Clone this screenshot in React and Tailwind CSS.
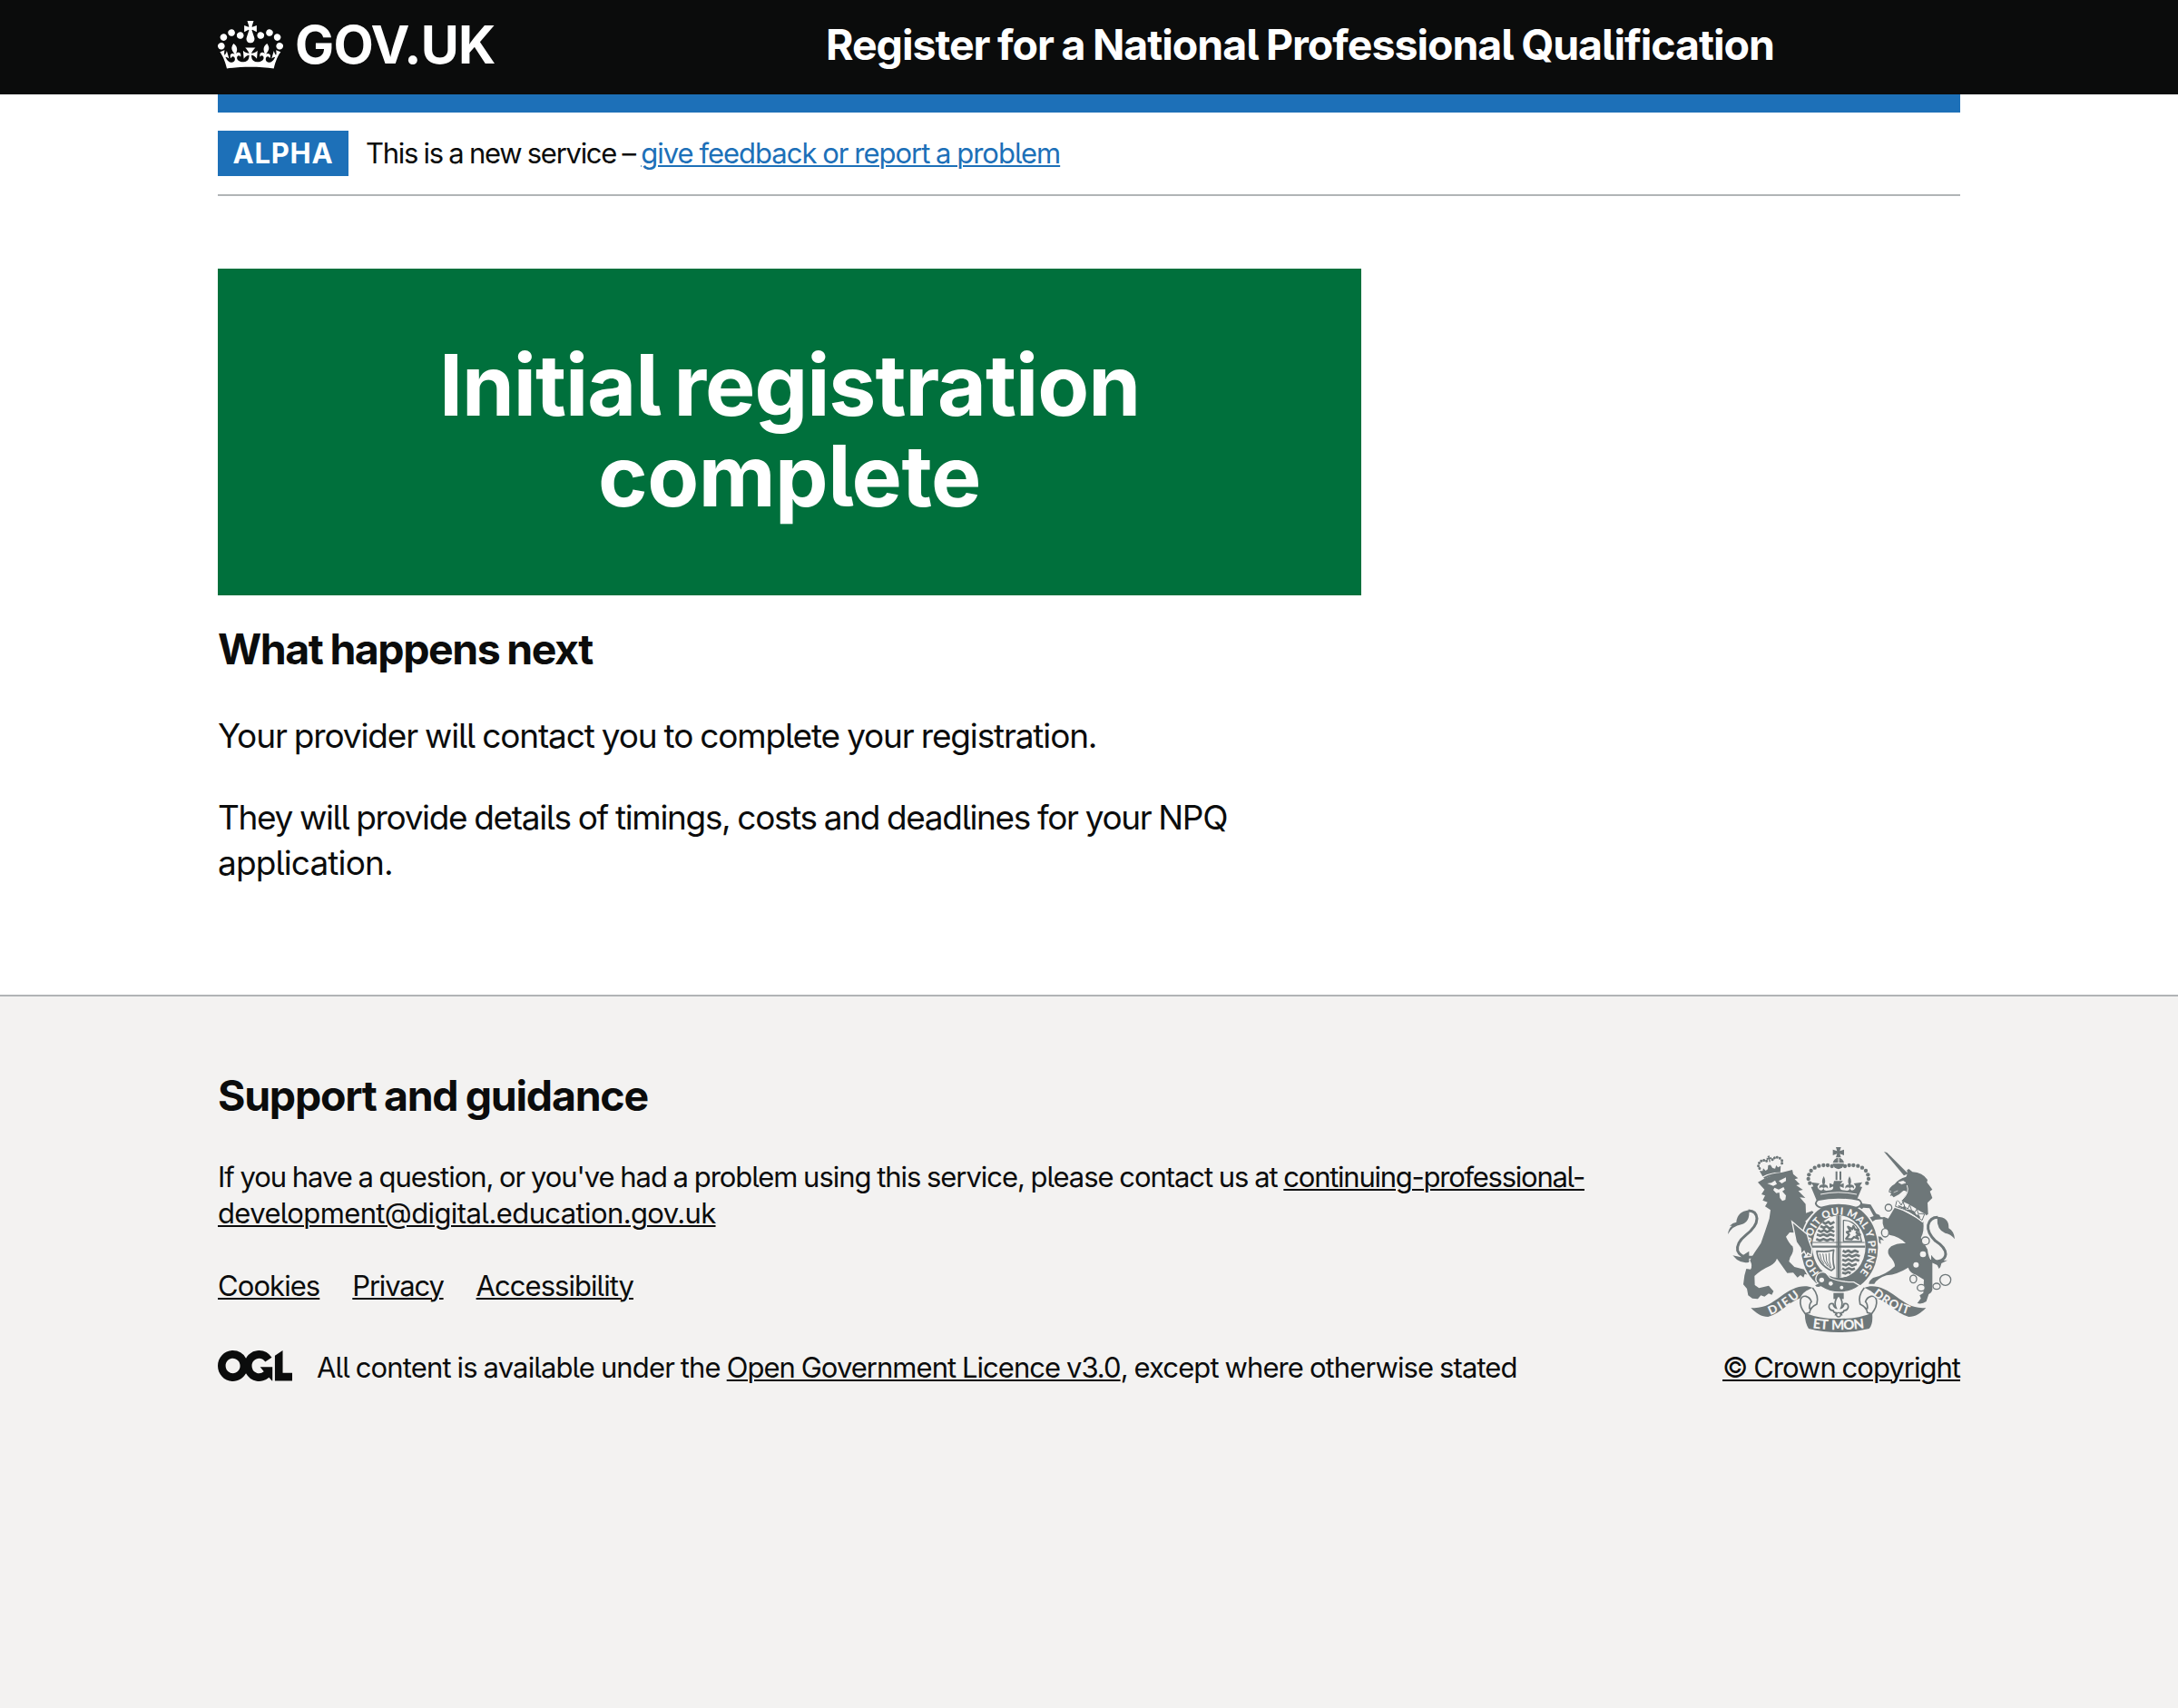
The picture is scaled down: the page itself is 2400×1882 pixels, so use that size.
import React from "react";

const CROWN =
  "M25 30.2c3.5 1.5 7.7-.2 9.1-3.7 1.5-3.6-.2-7.8-3.9-9.2-3.6-1.4-7.6.3-9.1 3.9-1.4 3.5.3 7.5 3.9 9zM9 39.5c3.6 1.5 7.8-.2 9.2-3.7 1.5-3.6-.2-7.8-3.9-9.1-3.6-1.5-7.6.2-9.1 3.8-1.4 3.5.3 7.5 3.8 9zM4.4 57.2c3.5 1.5 7.7-.2 9.1-3.8 1.5-3.6-.2-7.7-3.9-9.1-3.5-1.5-7.6.3-9.1 3.8-1.4 3.5.3 7.6 3.9 9.1zm38.3-21.4c3.5 1.5 7.7-.2 9.1-3.8 1.5-3.6-.2-7.7-3.9-9.1-3.6-1.5-7.6.3-9.1 3.8-1.3 3.6.4 7.7 3.9 9.1zm64.4-5.6c-3.6 1.5-7.8-.2-9.1-3.7-1.5-3.6.2-7.8 3.8-9.2 3.6-1.4 7.7.3 9.2 3.9 1.3 3.5-.4 7.5-3.9 9zm15.9 9.3c-3.6 1.5-7.7-.2-9.1-3.7-1.5-3.6.2-7.8 3.7-9.1 3.6-1.5 7.7.2 9.2 3.8 1.5 3.5-.3 7.5-3.8 9zm4.7 17.7c-3.6 1.5-7.8-.2-9.2-3.8-1.5-3.6.2-7.7 3.9-9.1 3.6-1.5 7.7.3 9.2 3.8 1.3 3.5-.4 7.6-3.9 9.1zM89.3 35.8c-3.6 1.5-7.8-.2-9.2-3.8-1.4-3.6.2-7.7 3.9-9.1 3.6-1.5 7.7.3 9.2 3.8 1.4 3.6-.3 7.7-3.9 9.1zM69.7 17.7l8.9 4.7V9.3l-8.9 2.8c-.2-.3-.5-.6-.9-.9L72.4 0H59.6l3.5 11.2c-.3.3-.6.5-.9.9l-8.8-2.8v13.1l8.8-4.7c.3.3.6.7.9.9l-5 15.4v.1c-.2.8-.4 1.6-.4 2.4 0 4.1 3.1 7.5 7 8.1h.2c.3 0 .7.1 1 .1.4 0 .7 0 1-.1h.2c4-.6 7.1-4.1 7.1-8.1 0-.8-.1-1.7-.4-2.4V34l-5.1-15.4c.4-.2.7-.6 1-.9zM66 92.8c16.9 0 32.8 1.1 47.1 3.2 4-16.9 8.9-26.7 14-33.5l-9.6-3.4c1 4.9 1.1 7.2 0 10.2-1.5-1.4-3-4.3-4.2-8.7L108.6 76c2.8-2 5-3.2 7.5-3.3-4.4 9.4-10 11.9-13.6 11.2-4.3-.8-6.3-4.6-5.6-7.9 1-4.7 5.7-5.9 8-.5 4.3-8.7-3-11.4-7.6-8.8 7.1-7.2 7.9-13.5 2.1-21.1-8 6.1-8.1 12.3-4.5 20.8-4.7-5.4-12.1-2.5-9.5 6.2 3.4-5.2 7.9-2 7.2 3.1-.6 4.3-6.4 7.8-13.5 7.2-10.3-.9-10.9-8-11.2-13.8 2.5-.5 7.1 1.8 11 7.3L80.2 60c-4.1 4.4-8 5.3-12.3 5.4 1.4-4.4 8-11.6 8-11.6H55.5s6.4 7.2 7.9 11.6c-4.2-.1-8-1-12.3-5.4l1.4 16.4c3.9-5.5 8.5-7.7 10.9-7.3-.3 5.8-.9 12.8-11.1 13.8-7.2.6-12.9-2.9-13.5-7.2-.7-5 3.8-8.3 7.1-3.1 2.7-8.7-4.6-11.6-9.4-6.2 3.7-8.5 3.6-14.7-4.6-20.8-5.8 7.6-5 13.9 2.2 21.1-4.7-2.6-11.9.1-7.7 8.8 2.3-5.5 7.1-4.2 8.1.5.7 3.3-1.3 7.1-5.7 7.9-3.5.7-9-1.8-13.5-11.2 2.5.1 4.7 1.3 7.5 3.3l-4.7-15.4c-1.2 4.4-2.7 7.2-4.3 8.7-1.1-3-.9-5.3 0-10.2l-9.5 3.4c5 6.9 9.9 16.7 14 33.5 14.8-2.1 30.8-3.2 47.7-3.2z";

const OGL =
  "M421.5 142.8V.1l-50.7 32.3v161.1h112.4v-50.7zm-122.3-9.6A47.12 47.12 0 0 1 221 97.8c0-26 21.1-47.1 47.1-47.1 16.7 0 31.4 8.7 39.7 21.8l42.7-27.2A97.63 97.63 0 0 0 268.1 0c-36.5 0-68.3 20.1-85.1 49.7A98 98 0 0 0 97.8 0C43.9 0 0 43.9 0 97.8s43.9 97.8 97.8 97.8c36.5 0 68.3-20.1 85.1-49.7a97.76 97.76 0 0 0 149.6 25.4l19.4 22.2h3v-87.8h-80l24.3 27.5zM97.8 145c-26 0-47.1-21.1-47.1-47.1s21.1-47.1 47.1-47.1 47.1 21.1 47.1 47.1S123.8 145 97.8 145";

const BEADS = [
  [386, 105], [372, 102], [358, 102], [343, 104], [329, 110], [317, 120], [310, 133], [308, 147], [313, 161],
];

const LION_BEADS = [
  [146, 104], [144, 95], [149, 86], [157, 81], [166, 81], [174, 85],
  [222, 104], [224, 95], [219, 86], [211, 81], [202, 81], [194, 85],
];

const INK = "#6e7779";
const PAPER = "#f3f2f1";

function CrestCrown() {
  return (
    <g fill={INK}>
      <path d="M399 42h17l-4 13 14-5v19l-14-5 4 12h-17l4-12-14 5v-19l14 5z" />
      <circle cx="407.500" cy="96" r="18.500" />
      <path d="M389 95h37M408 77v17" stroke={PAPER} strokeWidth="3" fill="none" />
      {BEADS.map(([x, y]) => (
        <g key={x}>
          <circle cx={x} cy={y} r="6.500" />
          <circle cx={815 - x} cy={y} r="6.500" />
        </g>
      ))}
      <path d="M401 122v29M414 122v29" stroke={INK} strokeWidth="6" />
      <path d="M393 154h29l-9 12 12-5v16l-12-5q-2 10 6 12l17 2q11-2 8-10-8-4-14 3-1-13 12-13-6-13 2-28 9 15 3 28 14 0 12 13-6-7-13-3-2 7 6 9 11-1 13-13l-7-10 28-4-8 14 8 2-20 48q-66-14-129 0l-20-48 8-2-8-14 28 4-7 10q2 12 13 13 8-2 6-9-7-4-13 3-2-13 12-13-6-13 3-28 8 15 2 28 13 0 12 13-6-7-14-3-3 8 8 10l17-2q8-2 6-12l-12 5v-16l12 5z" />
      <path d="M348 198q59-13 120 0" stroke={PAPER} strokeWidth="3" fill="none" />
      <path d="M341 216q66-14 134 0 10 6 8 14-4 10-18 12-58-18-114 0-14-2-18-12-2-8 8-14z" fill={PAPER} stroke={INK} strokeWidth="6" />
    </g>
  );
}

function Garter() {
  return (
    <g>
      <ellipse cx="411" cy="374" rx="127" ry="148" fill={INK} />
      <ellipse cx="409" cy="371" rx="88" ry="103" fill={PAPER} />
      <path id="motto" d="M345 457A96 111 0 1 1 474 460" fill="none" />
      <text fill={PAPER} fontFamily="Lato" fontWeight="900" fontSize="34">
        <textPath href="#motto" textLength="500">HONI SOIT QUI MAL Y PENSE</textPath>
      </text>
      <path d="M322 357h172M402 270v203M414 270v203" stroke={INK} strokeWidth="3" />
      <path d="M408 268v206M321 371h175" stroke={INK} strokeWidth="7" />
      <g fill="none" stroke={INK} strokeWidth="8" strokeLinejoin="round">
        <path d="M356 290l8 5 10-6 8 7 12-7M348 303l12 6 8-6 10 8 14-6M340 317l10 5 10-6 10 7 12-7 12 6M336 331l12 4 10-5 12 6 10-6 14 5M334 346l12 5 12-5 12 5 10-5 14 4" />
        <path d="M422 384l8 5 10-5 10 6 12-6 12 5M420 399l12 4 10-5 10 6 14-6 12 5M420 414l10 4 10-5 12 6 12-6 12 5M420 429l12 4 10-6 10 7 16-6M420 443l10 5 12-6 10 5 10-4M420 457l10 3 10-5 8 3" />
        <path d="M424 284q30-2 50 30l10 40h-60z" strokeWidth="4" />
        <path d="M433 345l10-14-8-8 12-4-8-14 14 8 4-10 6 12 10 0-6 10 12 6-12 4 6 10-14-6-8 8z" strokeWidth="7" />
        <path d="M336 386q4 44 48 64l10-8q-8-30-2-60-20 8-56 4z" strokeWidth="5" />
        <path d="M346 394q2 22 14 34M356 394q0 24 16 42M366 394q-2 26 14 48M377 392q-2 26 6 50" strokeWidth="3" />
      </g>
      <g fill={INK} stroke={PAPER} strokeWidth="4">
        <path d="M338 462q14-12 28-4l14 16q30 14 78 14l20 12q-30 22-66 22-34 0-62-18-18 6-22-6l12-6q-14-10-2-30z" />
        <path d="M254 288l24 20 26 22 6 22 10 26-2 22-12-8-4 10-8-16-10 10-2-20-14-20z" />
      </g>
      <g fill={PAPER}>
        <circle cx="382" cy="493" r="7" />
        <circle cx="418" cy="506" r="6" />
        <circle cx="352" cy="481" r="8" />
      </g>
    </g>
  );
}

function Lion() {
  return (
    <g fill={INK}>
      <path d="M141 158l20-11 38-16 56-14 3 14 16 14-11 3 17 17-12 3 22 15-15 4 23 23-18-2 19 22 1 30 20-7q8 4 4 8l-26 26 18 28 12 36q2 22-12 26l-6-8-4 8-8-14-6 6-2-20-10 2 2-16-12 4-2-14-22-1-12 14q10 22 22 32 6 16-8 36l-4 14 18 18 32 8 12 18-10-3-4 12-10-8-10 8-14-16-20 1-16-22-18-26q-4 14-22 24-32 14-52 34l1 30 14 10 32-8 16 18-6 12-10-4-14 10-12-4-10 12-18-2-14-10-4-22-12-14 4-30 6-22 14 2q8-12-2-30l14-24 22-32 14-40 14-42 4-28-18-12 8-14-16-6 8-16-12-4 10-16z" />
      <path d="M172 162l14-2 12-8 6 12-12 6zM210 154l24-12 0 12-14 8z" fill={PAPER} />
      <path d="M196 176l14 6 16-8 4 8-8 6 12 14-2 14-10 4-8-10-2-18-10 2-10-10z" fill={PAPER} />
      <g transform="rotate(-13 184 105)">
        <path d="M150 132l-6-20 10 2 4-8 6 10 8-4 4-12 8 0 4 12 8 4 6-10 4 8 10-2-6 20q-30-8-60 0z" />
        {LION_BEADS.map(([x, y]) => (
          <circle key={`${x}-${y}`} cx={x} cy={y} r="4.500" />
        ))}
        <path d="M180 70h8l-2 7 6-2v8l-6-2v10h-4V81l-6 2v-8l6 2zM152 135q32-8 64 0l-2 6q-30-8-60 0z" />
      </g>
      <path d="M132 404Q84 412 74 384q-4-26 26-50 38-30 38-56-2-26-28-26" fill="none" stroke={INK} strokeWidth="9" />
      <path d="M112 250q4 40-26 48-28 4-44 32 2-20 14-28l-8 0q10-10 22-12 2-34 42-40zM112 386q-18 10-26 20l-28-6 14 14q20 14 40 8z" />
    </g>
  );
}

function Unicorn() {
  return (
    <g fill={INK}>
      <path d="M558 57l10 3 70 70-14 6z" />
      <path d="M640 114l12 10q34 2 50 26l-2 8 18 24-8 6 8 22-16 16 2 38-8 4q-38-30-80-48l16-22q4-14-10-12l-14 12-18 10-6-6-6 2 4-10-9-4q2-16 20-26 14-18 38-24 6-8 3-22z" />
      <path d="M606 158l16-4 8 6-14 4zM590 192l14-6M574 186l8 2" fill={PAPER} stroke={PAPER} strokeWidth="2" />
      <path d="M634 168q10 24-16 48" fill="none" stroke={PAPER} strokeWidth="3" />
      <path d="M596 238l92 50q4 34-8 54l22 38q2 26 16 44v82q2 14-12 22l-8 24q-14 10-30 6l12-16-4-10 12-8 2-44-26-16q-20-6-26-24-34 22-72 26-30 10-40 28l-18 0q0-10 14-20 40-8 72-38 0-16-18-34-12-18 6-32 20-12 48-10-20-22-54-28-26-24-22-52l-24 2-16 10-8 12 12 14 10 18 20 2 10 12-12-2 2 14-14-10-14-6-14-32-10-28 4-8 24-8-14-26-20-2-16 14-4-16 14-12 30 4 18 30 40 16z" />
      <path d="M597 212l99 52-10 28q-44-36-94-50z" fill={PAPER} />
      <path d="M603 218l6 6 6 10 6-12 6 18 10 6 6-14 6 18 10 8 8-12 4 16 10 0 12 2" fill="none" stroke={INK} strokeWidth="3" strokeLinejoin="round" />
      <path d="M600 220l-4 18q48 12 88 46l8-20" fill="none" stroke={INK} strokeWidth="3" />
      <path d="M606 234l6 2 8 4 6-4 6 12 12 0 8 4 6 2 8 12 6-2 6 10-4 4q-34-26-70-40z" />
      <path d="M708 418q50 8 54-22 0-22-34-44-28-28-24-52 6-26 32-26" fill="none" stroke={INK} strokeWidth="9" />
      <path d="M728 272q46-2 44 38 18 10 20 36-14-18-32-20-28-10-26-52zM714 398q12 16 22 20l32-2-20 10q-2 12-8 18l-6-12-20-10z" />
      <g fill={PAPER}>
        <circle cx="687" cy="396" r="10" />
        <circle cx="664" cy="431" r="9" />
        <circle cx="552" cy="266" r="8" />
      </g>
      <g fill={PAPER} stroke={INK} strokeWidth="4">
        <circle cx="573" cy="242" r="11" />
        <ellipse cx="562" cy="325" rx="12" ry="14" />
        <circle cx="695" cy="352" r="13" />
        <ellipse cx="655" cy="478" rx="11" ry="13" />
        <ellipse cx="681" cy="507" rx="13" ry="11" />
        <ellipse cx="732" cy="502" rx="12" ry="10" />
        <circle cx="761" cy="481" r="18" />
      </g>
    </g>
  );
}

function Scroll() {
  return (
    <g fill={INK}>
      <path d="M118 573c44 4 66-14 100-38 32-24 70-42 104-28-20 8-36 18-40 34-40 14-62 48-107 62-22 0-40-12-57-30z" />
      <path d="M697 573c-44 4-66-14-100-38-32-24-70-42-104-28 20 8 36 18 40 34 40 14 62 48 107 62 22 0 40-12 57-30z" />
      <path d="M322 507q22 26 14 54-22 10-24 28l-14 4q-20-24-16-46 4-14 18-12 14 4 18 18-8 8-6 24" fill={PAPER} stroke={INK} strokeWidth="5" />
      <path d="M493 507q-22 26-14 54 22 10 24 28l14 4q20-24 16-46-4-14-18-12-14 4-18 18 8 8 6 24" fill={PAPER} stroke={INK} strokeWidth="5" />
      <path d="M297 590q50 20 111 19 62 1 111-19 4 36-10 52-48 12-101 12t-99-12q-14-22-12-52z" />
      <path id="dieu" d="M182 597Q226 581 286 531" fill="none" />
      <path id="droit" d="M520 530Q578 580 644 596" fill="none" />
      <path id="etmon" d="M322 640Q408 652 494 640" fill="none" />
      <g fill={PAPER} fontFamily="Lato" fontWeight="900" fontSize="40" wordSpacing="6">
        <text><textPath href="#dieu" textLength="116">DIEU</textPath></text>
        <text><textPath href="#droit" textLength="136">DROIT</textPath></text>
        <text fontSize="45"><textPath href="#etmon" textLength="172">ET MON</textPath></text>
      </g>
      <path d="M391 524h34v20h-34z" />
      <path d="M408 532q-18 20-8 42-8-2-10-14-14-4-14 10 2 12 14 12 2 8 10 8l-2 6h20l-2-6q8 0 10-8 12 0 14-12 0-14-14-10-2 12-10 14 10-22-8-42z" fill={PAPER} stroke={INK} strokeWidth="5" />
      <circle cx="408" cy="596" r="7" fill={PAPER} stroke={INK} strokeWidth="4" />
    </g>
  );
}

function Crest({ className }) {
  return (
    <svg viewBox="42 42 750 612" className={className} aria-hidden="true">
      <Lion />
      <Unicorn />
      <ellipse cx="411" cy="374" rx="132" ry="153" fill={PAPER} />
      <Garter />
      <CrestCrown />
      <Scroll />
    </svg>
  );
}

const link = "underline decoration-2 underline-offset-[2px]";

export default function App() {
  return (
    <div className="flex h-[1882px] flex-col bg-white font-[Inter,sans-serif] text-[31px] leading-10 text-[#0b0c0c] [font-feature-settings:'cv05'] [word-spacing:-0.03em]">
      <header className="h-[104px] bg-[#0b0c0c] text-white">
        <div className="mx-auto flex w-[1920px] items-start font-bold leading-[98px]">
          <a className="flex w-[670px] items-start">
            <svg viewBox="0 0 132 97" className="mt-[23px] h-[53px] w-[72px] fill-current" aria-hidden="true">
              <path fillRule="evenodd" d={CROWN} />
            </svg>
            <span className="ml-[13px] text-[57.5px] tracking-[-0.0134em]">GOV.UK</span>
          </a>
          <a className="whitespace-nowrap text-[46.5px] tracking-[-0.0226em] [word-spacing:-0.03em]">Register for a National Professional Qualification</a>
        </div>
      </header>

      <div className="mx-auto w-[1920px]">
        <div className="h-5 bg-[#1d70b8]" />
        <div className="flex border-b-2 border-[#b1b4b6] py-5 leading-[50px]">
          <strong className="mr-[19px] w-36 bg-[#1d70b8] text-center font-bold tracking-[0.0249em] text-white">ALPHA</strong>
          <span className="whitespace-pre">
            <span className="tracking-[-0.0416em]">This is a new service – </span>
            <a className={`${link} tracking-[-0.0326em] text-[#1d70b8]`}>give feedback or report a problem</a>
          </span>
        </div>

        <main className="w-[1260px] pt-20">
          <div className="h-[360px] bg-[#00703c] pt-[78px] text-center text-[93px] font-bold leading-[100px] text-white">
            <h1 className="tracking-[-0.011em] [word-spacing:-0.07em]">Initial registration<br /><span className="tracking-[-0.0055em]">complete</span></h1>
          </div>
          <h2 className="mt-[34px] text-[46.5px] font-bold leading-[50px] tracking-[-0.032em] [word-spacing:-0.03em]">What happens next</h2>
          <div className="mt-[46px] space-y-10 text-[37px] leading-[50px] [word-spacing:-0.03em]">
            <p className="tracking-[-0.0312em]">Your provider will contact you to complete your registration.</p>
            <p className="tracking-[-0.0362em]">They will provide details of timings, costs and deadlines for your NPQ<br /><span className="tracking-[-0.0237em]">application.</span></p>
          </div>
        </main>
      </div>

      <footer className="mt-[120px] flex-1 border-t-2 border-[#b1b4b6] bg-[#f3f2f1] pt-[84px]">
        <div className="mx-auto flex w-[1920px] items-end justify-between whitespace-nowrap">
          <div>
            <h2 className="text-[46.5px] font-bold leading-[50px] tracking-[-0.0272em] [word-spacing:-0.03em]">Support and guidance</h2>
            <p className="mt-[45px]">
              <span className="tracking-[-0.0339em]">If you have a question, or you've had a problem using this service, please contact us at </span>
              <a className={`${link} tracking-[-0.0406em]`}>continuing-professional-<br /><span className="tracking-[-0.02em]">development@digital.education.gov.uk</span></a>
            </p>
            <ul className="mt-10 flex gap-9">
              <li><a className={`${link} tracking-[-0.0299em]`}>Cookies</a></li>
              <li><a className={`${link} tracking-[-0.0385em]`}>Privacy</a></li>
              <li><a className={`${link} tracking-[-0.0308em]`}>Accessibility</a></li>
            </ul>
            <div className="mt-[50px] flex">
              <svg viewBox="0 0 483.2 195.7" className="mt-px h-[34px] w-[82px] fill-current" preserveAspectRatio="none" aria-hidden="true">
                <path d={OGL} />
              </svg>
              <span className="ml-[27px] whitespace-pre">
                <span className="tracking-[-0.0281em]">All content is available under the </span>
                <a className={`${link} tracking-[-0.0313em]`}>Open Government Licence v3.0</a>
                <span className="tracking-[-0.0291em]">, except where otherwise stated</span>
              </span>
            </div>
          </div>
          <a className="flex flex-col items-center gap-[19px]">
            <Crest className="h-[204px] w-[250px]" />
            <span className={`${link} tracking-[-0.0317em]`}>© Crown copyright</span>
          </a>
        </div>
      </footer>
    </div>
  );
}
